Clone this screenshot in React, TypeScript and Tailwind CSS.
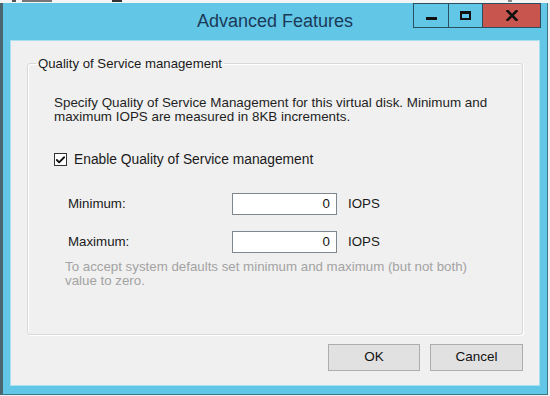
import { Check } from 'lucide-react'

const FONT = 'font-["Liberation_Sans","Arial",sans-serif]'

function CaptionButtons() {
  return (
    <div className="flex h-[25px] items-stretch">
      <div className="flex w-[35px] items-center justify-center border border-r-0 border-[#2a4f60] bg-[#62c6e7]">
        <span className="mt-[6px] block h-[3px] w-[11px] bg-[#111]" />
      </div>
      <div className="flex w-[34px] items-center justify-center border border-r-0 border-[#2a4f60] bg-[#62c6e7]">
        <span className="block h-[9px] w-[11px] border-2 border-t-[3px] border-[#111]" />
      </div>
      <div className="flex w-[59px] items-center justify-center border border-[#2a4f60] bg-[#c9554f]">
        <svg width="12" height="11" viewBox="0 0 12 11">
          <path d="M1.5 1 L10.5 10 M10.5 1 L1.5 10" stroke="#111" strokeWidth="2.6" strokeLinecap="square" />
        </svg>
      </div>
    </div>
  )
}

function IopsRow({ label, value, className }: { label: string; value: string; className?: string }) {
  return (
    <div className={`flex items-center ${className ?? ''}`}>
      <span className="w-[178px] pl-[14px] text-[13.3px] text-[#1a1a1a]">{label}</span>
      <div className="flex h-[22px] w-[105px] items-center justify-end border border-[#7f868c] bg-white pr-[6px] text-[13.3px] text-[#111]">
        {value}
      </div>
      <span className="ml-[11px] text-[13.3px] text-[#1a1a1a]">IOPS</span>
    </div>
  )
}

export default function App() {
  return (
    <div className={`flex h-[396px] w-[550px] flex-col bg-[#eef0f1] ${FONT}`}>
      {/* background window peeking out above */}
      <div className="flex h-[3px] items-start gap-[6px] pl-[12px] bg-[#f3f4f4]">
        <span className="h-[2px] w-[4px] bg-[#555]" />
        <span className="h-[2px] w-[30px] bg-[#777]" />
        <span className="ml-[54px] h-[2px] w-[10px] bg-[#333]" />
        <span className="ml-[380px] h-[2px] w-[4px] bg-[#888]" />
      </div>

      <div className="mr-[2px] mb-[1px] flex flex-1 flex-col border-l-[3px] border-r border-b border-l-[#4a6671] border-r-[#3f7388] border-b-[#3f7388] bg-[#62c6e7]">
        {/* title bar */}
        <div className="grid h-[37px] grid-cols-[1fr_auto_1fr] items-start">
          <div />
          <div className="pt-[7px] text-[18px] leading-[22px] text-[#1b3a58]">Advanced Features</div>
          <div className="flex justify-end pr-[6px]">
            <CaptionButtons />
          </div>
        </div>

        {/* client area */}
        <div className="mx-[7px] mb-[8px] flex flex-1 flex-col border border-[#a8e0f2] bg-[#f0f0f0] px-[16px] pt-[15px]">
          <fieldset className="rounded-[3px] border border-[#d9d9d9] pb-[46px] pt-[25px] shadow-[inset_1px_1px_0_#fff,1px_1px_0_#fff]">
            <legend className="ml-[8px] px-[2px] text-[13.2px] leading-[15px] text-[#1a1a1a]">
              Quality of Service management
            </legend>

            <div className="px-[26px]">
              <p className="text-[13.4px] leading-[14px] text-[#1f1f1f]">
                Specify Quality of Service Management for this virtual disk. Minimum and
                <br />
                maximum IOPS are measured in 8KB increments.
              </p>

              <label className="mt-[28px] flex items-center gap-[7px] text-[13.8px] leading-[15px] text-[#1a1a1a]">
                <span className="flex h-[13px] w-[13px] items-center justify-center border border-[#333] bg-white">
                  <Check size={12} strokeWidth={4} color="#111" />
                </span>
                Enable Quality of Service management
              </label>

              <IopsRow label="Minimum:" value="0" className="mt-[26px]" />
              <IopsRow label="Maximum:" value="0" className="mt-[16px]" />

              <p className="mt-[7px] pl-[11px] text-[13.3px] leading-[14px] text-[#a3a3a3]">
                To accept system defaults set minimum and maximum (but not both)
                <br />
                value to zero.
              </p>
            </div>
          </fieldset>

          <div className="mt-[9px] flex justify-end gap-[10px]">
            <button className="h-[27px] w-[92px] border border-[#adadad] bg-[#e1e1e1] text-[13.5px] text-[#111]">
              OK
            </button>
            <button className="h-[27px] w-[93px] border border-[#adadad] bg-[#e1e1e1] text-[13.5px] text-[#111]">
              Cancel
            </button>
          </div>
        </div>
      </div>
    </div>
  )
}
